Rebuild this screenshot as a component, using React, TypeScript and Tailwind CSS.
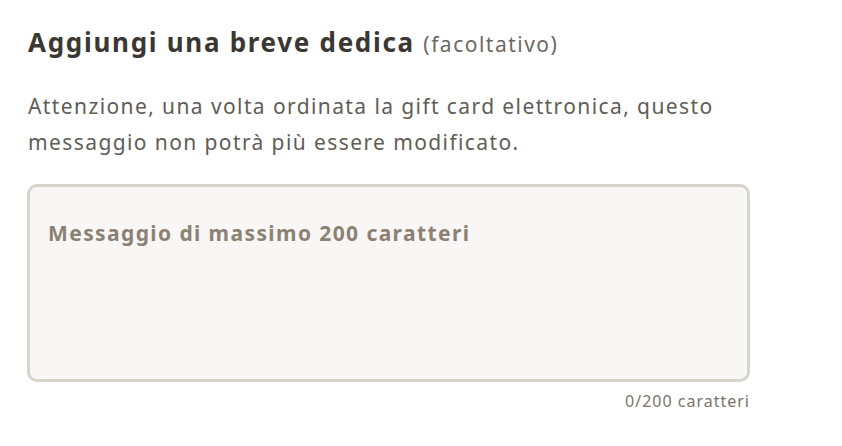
import React from 'react';

const MAX = 200;

export default function App() {
  const [text, setText] = React.useState('');

  return (
    <div className="min-h-screen bg-white font-['Noto_Sans',sans-serif]">
      <div className="pl-[28px] pt-[24px] w-[750px]">
        <h2 className="text-[26px] tracking-[1.7px] font-bold text-[#3b3732] leading-[36px]">
          Aggiungi una breve dedica{' '}
          <span className="text-[21px] tracking-[1.5px] font-normal text-[#6d6862]">(facoltativo)</span>
        </h2>
        <p className="mt-[26px] text-[21px] tracking-[1.4px] leading-[36px] text-[#625c56]">
          Attenzione, una volta ordinata la gift card elettronica, questo messaggio non potrà più essere
          modificato.
        </p>
        <textarea
          value={text}
          maxLength={MAX}
          onChange={(e) => setText(e.target.value)}
          placeholder="Messaggio di massimo 200 caratteri"
          className="mt-[24px] -ml-px block w-[723px] h-[198px] resize-none rounded-[10px] border-[3px] border-[#d7d4cb] bg-[#f9f7f5] px-[18px] pt-[32px] text-[21px] tracking-[1.4px] leading-[28px] text-[#3b3732] outline-none placeholder:font-bold placeholder:text-[#8c8273]"
        />
        <div className="mt-[9px] w-[722px] text-right text-[16px] tracking-[1px] leading-[20px] text-[#7b7369]">
          {text.length}/{MAX} caratteri
        </div>
      </div>
    </div>
  );
}
